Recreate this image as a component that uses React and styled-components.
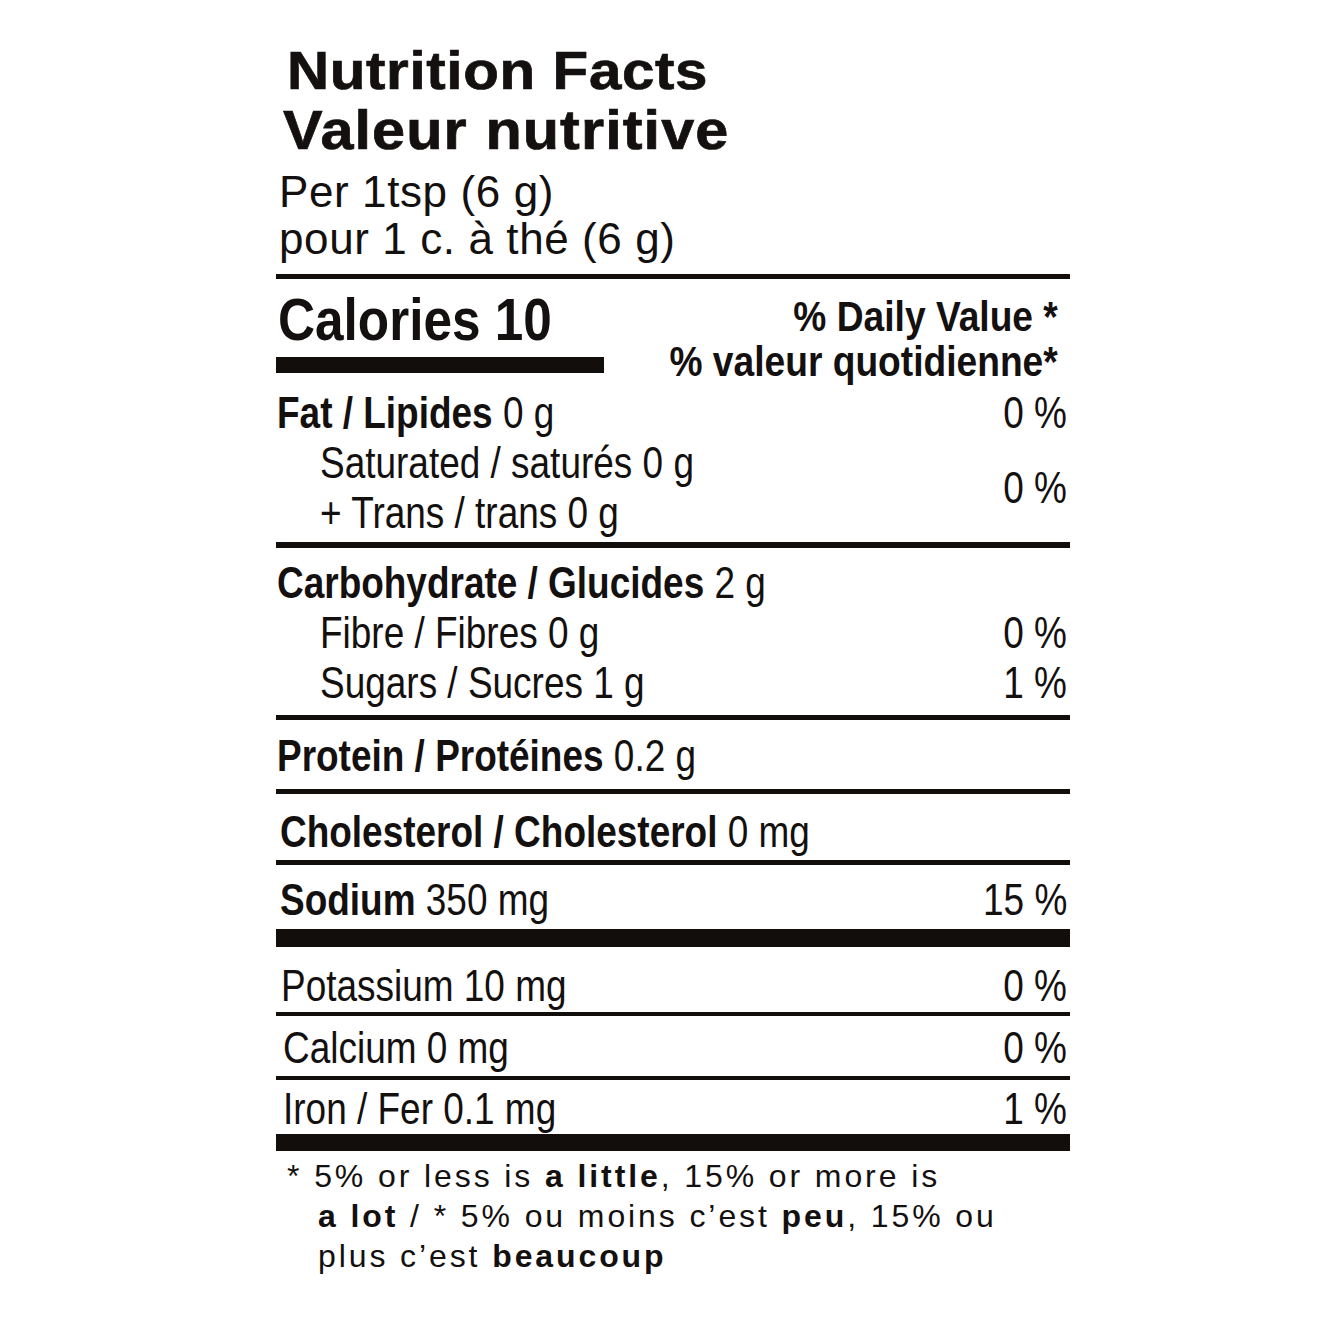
import React from "react";
import styled, { createGlobalStyle } from "styled-components";

const GlobalStyle = createGlobalStyle`
  html, body { margin: 0; padding: 0; background: #ffffff; }
  body { color: #141010; }
`;

const SANS = `"Liberation Sans", Arial, sans-serif`;

const Label = styled.div`
  margin-left: 276px;
  width: 794px;
  padding-top: 40px;
  color: #141010;
  font-family: ${SANS};
`;

/* condensed / extended look: Liberation Sans squeezed or widened horizontally */
const Squeeze = styled.span`
  display: inline-block;
  white-space: nowrap;
  transform: scaleX(${(p) => p.$sx});
  transform-origin: ${(p) => (p.$right ? "right" : "left")} center;
  b { font-weight: 700; }
`;

const Title = styled.div`
  font-weight: 700;
  font-size: ${(p) => p.$size}px;
  letter-spacing: ${(p) => p.$track}px;
  line-height: 60px;
  padding-left: ${(p) => p.$indent}px;
  white-space: nowrap;
  -webkit-text-stroke: 0.7px #141010;
`;

const ServingBlock = styled.div`
  margin-top: 8px;
`;

const Serving = styled.div`
  font-size: 44px;
  line-height: 47px;
  padding-left: 3px;
  letter-spacing: 0.6px;
  white-space: nowrap;
`;

const Rule = styled.div`
  height: ${(p) => p.$h}px;
  margin-top: ${(p) => p.$gap || 0}px;
  width: ${(p) => (p.$w ? `${p.$w}px` : "100%")};
  background: #120e0c;
`;

const CalHeader = styled.div`
  display: flex;
  justify-content: space-between;
  height: 105px;
`;

const CalLeft = styled.div`
  padding-top: 11px;
`;

const Calories = styled.div`
  font-weight: 700;
  font-size: 60px;
  line-height: 60px;
  padding-left: 2px;
`;

const DailyValue = styled.div`
  padding-top: 15px;
  padding-right: 12px;
  display: flex;
  flex-direction: column;
  align-items: flex-end;
  font-weight: 700;
  font-size: 42px;
  line-height: 45px;
`;

const Section = styled.div`
  padding-top: ${(p) => p.$pad}px;
  display: grid;
  grid-template-columns: 1fr auto;
  grid-auto-rows: 50px;
`;

const Name = styled.div`
  font-size: 44px;
  line-height: 50px;
  padding-left: ${(p) => (p.$sub ? 44 : 1) + (p.$shift || 0)}px;
  white-space: nowrap;
`;

const Pct = styled.div`
  font-size: 44px;
  line-height: 50px;
  text-align: right;
  padding-right: 3px;
  white-space: nowrap;
  grid-row: ${(p) => (p.$span ? `span ${p.$span}` : "auto")};
  align-self: center;
`;

const Footnote = styled.div`
  padding-top: 5px;
  padding-left: 42px;
  text-indent: -31px;
  font-size: 32px;
  line-height: 40px;
  letter-spacing: 2.9px;
  white-space: nowrap;
  b { font-weight: 700; }
`;

const N = ({ children, ...rest }) => (
  <Name {...rest}>
    <Squeeze $sx={0.84}>{children}</Squeeze>
  </Name>
);

const P = ({ children, ...rest }) => (
  <Pct {...rest}>
    <Squeeze $sx={0.84} $right>{children}</Squeeze>
  </Pct>
);

export default function App() {
  return (
    <>
      <GlobalStyle />
      <Label>
        <Title $size={54} $track={0.6} $indent={11}>
          <Squeeze $sx={1.08}>Nutrition Facts</Squeeze>
        </Title>
        <Title $size={55} $track={1} $indent={7}>
          <Squeeze $sx={1.08}>Valeur nutritive</Squeeze>
        </Title>
        <ServingBlock>
          <Serving>Per 1tsp (6 g)</Serving>
          <Serving>pour 1 c. à thé (6 g)</Serving>
        </ServingBlock>
        <Rule $h={5} $gap={12} />

        <CalHeader>
          <CalLeft>
            <Calories>
              <Squeeze $sx={0.855}>Calories 10</Squeeze>
            </Calories>
            <Rule $h={16} $gap={7} $w={328} />
          </CalLeft>
          <DailyValue>
            <Squeeze $sx={0.885} $right>% Daily Value *</Squeeze>
            <Squeeze $sx={0.885} $right>% valeur quotidienne*</Squeeze>
          </DailyValue>
        </CalHeader>

        <Section $pad={4}>
          <N><b>Fat / Lipides</b> 0 g</N>
          <P>0 %</P>
          <N $sub>Saturated / saturés 0 g</N>
          <P $span={2}>0 %</P>
          <N $sub>+ Trans / trans 0 g</N>
        </Section>
        <Rule $h={6} $gap={4} />

        <Section $pad={10}>
          <N><b>Carbohydrate / Glucides</b> 2 g</N>
          <Pct />
          <N $sub>Fibre / Fibres 0 g</N>
          <P>0 %</P>
          <N $sub>Sugars / Sucres 1 g</N>
          <P>1 %</P>
        </Section>
        <Rule $h={5} $gap={7} />

        <Section $pad={11}>
          <N><b>Protein / Protéines</b> 0.2 g</N>
          <Pct />
        </Section>
        <Rule $h={5} $gap={8} />

        <Section $pad={13}>
          <N $shift={3}><b>Cholesterol / Cholesterol</b> 0 mg</N>
          <Pct />
        </Section>
        <Rule $h={5} $gap={3} />

        <Section $pad={10}>
          <N $shift={3}><b>Sodium</b> 350 mg</N>
          <P>15 %</P>
        </Section>
        <Rule $h={18} $gap={4} />

        <Section $pad={14}>
          <N $shift={4}>Potassium 10 mg</N>
          <P>0 %</P>
        </Section>
        <Rule $h={4} $gap={1} />

        <Section $pad={7}>
          <N $shift={6}>Calcium 0 mg</N>
          <P>0 %</P>
        </Section>
        <Rule $h={4} $gap={3} />

        <Section $pad={4}>
          <N $shift={6}>Iron / Fer 0.1 mg</N>
          <P>1 %</P>
        </Section>
        <Rule $h={17} $gap={0} />

        <Footnote>
          * 5% or less is <b>a little</b>, 15% or more is
          <br />
          <b>a lot</b> / * 5% ou moins c’est <b>peu</b>, 15% ou
          <br />
          plus c’est <b>beaucoup</b>
        </Footnote>
      </Label>
    </>
  );
}
